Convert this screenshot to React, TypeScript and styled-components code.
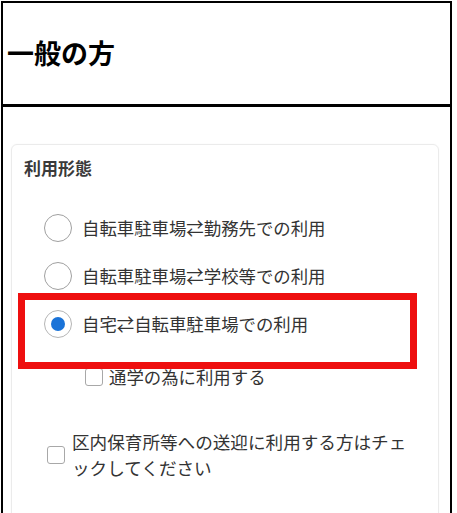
import React from 'react';
import styled, { createGlobalStyle } from 'styled-components';

const GlobalStyle = createGlobalStyle`
  html, body {
    margin: 0;
    padding: 0;
    background: #fff;
    overflow: hidden;
  }
  body {
    font-family: "Noto Sans CJK JP", "Noto Sans", sans-serif;
    color: #333;
  }
`;

const usageOptions = [
  { label: '自転車駐車場⇄勤務先での利用', checked: false },
  { label: '自転車駐車場⇄学校等での利用', checked: false },
  { label: '自宅⇄自転車駐車場での利用', checked: true },
];

const App = () => {
  return (
    <>
      <GlobalStyle />
      <Frame lang="ja">
        <Header>
          <Title>一般の方</Title>
        </Header>
        <Body>
          <Card>
            <Legend>利用形態</Legend>
            <RadioGroup>
              {usageOptions.map((opt) => (
                <RadioRow key={opt.label}>
                  <Radio checked={opt.checked} />
                  <OptionText>{opt.label}</OptionText>
                </RadioRow>
              ))}
            </RadioGroup>
            <SubCheck>
              <Box />
              <OptionText>通学の為に利用する</OptionText>
            </SubCheck>
            <PickupCheck>
              <Box />
              <PickupText>
                区内保育所等への送迎に利用する方はチェ
                <br />
                ックしてください
              </PickupText>
            </PickupCheck>
            <Highlight />
          </Card>
        </Body>
      </Frame>
    </>
  );
};

const Frame = styled.div`
  margin: 1px 0 0 1px;
  width: 451px;
  box-sizing: border-box;
  border: 2px solid #000;
  border-bottom: none;
`;

const Header = styled.div`
  height: 104px;
  display: flex;
  align-items: center;
  padding: 0 0 2px 4px;
  box-sizing: border-box;
  border-bottom: 3px solid #000;
`;

const Title = styled.h1`
  margin: 0;
  font-size: 27px;
  font-weight: 700;
  color: #000;
  line-height: 1;
`;

const Body = styled.div`
  padding: 37px 11px 0 8px;
  height: 420px;
`;

const Card = styled.div`
  position: relative;
  border: 1px solid #ebebeb;
  border-radius: 6px;
  padding: 11px 12px 60px 12px;
  box-shadow: 0 0 2px rgba(0, 0, 0, 0.04);
`;

const Legend = styled.div`
  font-size: 17px;
  font-weight: 700;
  line-height: 24px;
  color: #3a3a3a;
`;

const RadioGroup = styled.div`
  margin-top: 24px;
  padding-left: 20px;
  display: flex;
  flex-direction: column;
`;

const RadioRow = styled.div`
  height: 48px;
  display: flex;
  align-items: center;
  gap: 10px;
`;

const Radio = styled.span<{ checked: boolean }>`
  width: 28px;
  height: 28px;
  box-sizing: border-box;
  border-radius: 50%;
  border: 1.5px solid ${(p) => (p.checked ? '#b5b5b5' : '#a0a0a0')};
  display: flex;
  align-items: center;
  justify-content: center;
  flex-shrink: 0;
  &::after {
    content: '';
    width: 14px;
    height: 14px;
    border-radius: 50%;
    background: #1a73d8;
    display: ${(p) => (p.checked ? 'block' : 'none')};
  }
`;

const OptionText = styled.span`
  font-size: 17.4px;
  line-height: 26px;
  color: #333;
  white-space: nowrap;
`;

const Box = styled.span`
  width: 18px;
  height: 18px;
  box-sizing: border-box;
  border: 1.5px solid #a8a8a8;
  border-radius: 3px;
  flex-shrink: 0;
`;

const SubCheck = styled.div`
  margin-top: 16px;
  padding-left: 61px;
  display: flex;
  align-items: center;
  gap: 6px;
`;

const PickupCheck = styled.div`
  margin-top: 39px;
  padding-left: 23px;
  display: flex;
  align-items: center;
  gap: 7px;
`;

const PickupText = styled.span`
  font-size: 17.6px;
  line-height: 26px;
  color: #333;
  white-space: nowrap;
`;

const Highlight = styled.div`
  position: absolute;
  left: 6px;
  top: 148px;
  width: 399px;
  height: 76px;
  box-sizing: border-box;
  border: 7px solid #ee0f0f;
  pointer-events: none;
`;

export default App;
